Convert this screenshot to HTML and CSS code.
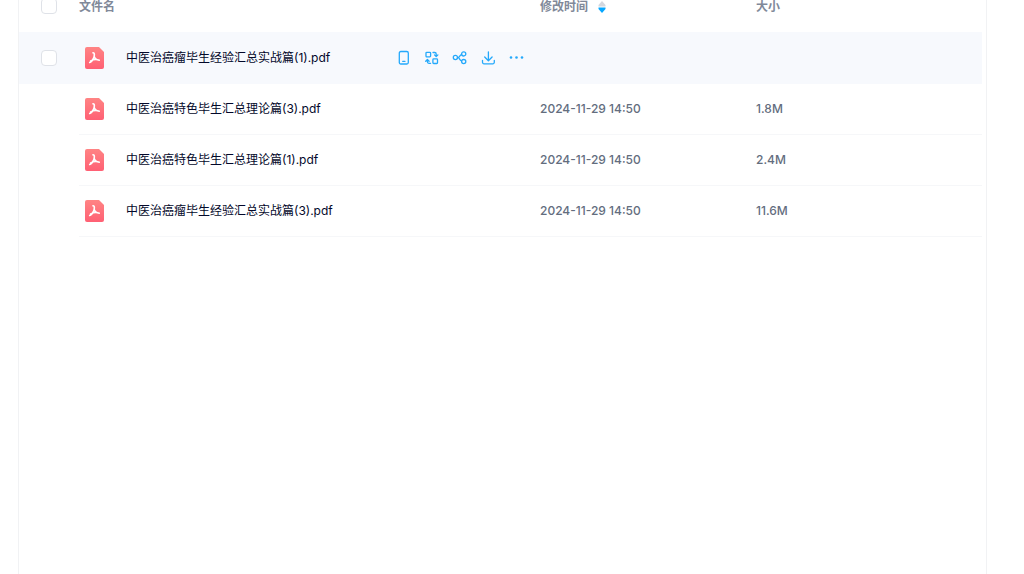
FILE: index.html
```html
<!DOCTYPE html>
<html lang="zh-CN">
<head>
<meta charset="utf-8">
<title>文件列表</title>
<link rel="stylesheet" href="styles.css">
</head>
<body>
<svg class="defs" aria-hidden="true">
  <defs>
    <linearGradient id="pdf-fill" x1="0" y1="0" x2="0" y2="1">
      <stop offset="0" stop-color="#ff8484"/>
      <stop offset="1" stop-color="#ff6074"/>
    </linearGradient>
    <symbol id="pdf" viewBox="0 0 19 22">
      <path d="M2 0H14L19 5V20A2 2 0 0 1 17 22H2A2 2 0 0 1 0 20V2A2 2 0 0 1 2 0Z" fill="url(#pdf-fill)"/>
      <path d="M8 5.800C9.800 5.600 9.600 9 8.600 11.200C7.600 13.400 6.200 15.200 4.700 15.500M9.100 9.200C9.600 11.300 11.600 12.800 14 13M5.600 14C8 12.700 11.300 12 14.200 13.200" fill="none" stroke="#fff" stroke-width="1.600" stroke-linecap="round" stroke-linejoin="round"/>
    </symbol>
  </defs>
</svg>
<main class="panel">
  <table class="files">
    <colgroup><col class="col-check"><col><col class="col-date"><col class="col-size"></colgroup>
    <thead>
      <tr>
        <th class="check-cell"><input class="check" type="checkbox" aria-label="全选"></th>
        <th scope="col">文件名</th>
        <th scope="col">
          <button class="sort" type="button">修改时间
            <svg class="sort-icon" viewBox="0 0 8 12" aria-hidden="true"><path d="M4 0L7.500 4V5.500H.5V4Z" fill="#d4d7de"/><path d="M.5 6.500H7.500V8L4 12L.5 8Z" fill="#06a7ff"/></svg>
          </button>
        </th>
        <th scope="col">大小</th>
      </tr>
    </thead>
    <tbody>
      <tr class="active">
        <td class="check-cell"><input class="check" type="checkbox" aria-label="选择文件"></td>
        <td>
          <div class="file">
            <svg class="file-icon" aria-hidden="true"><use href="#pdf"/></svg>
            <a class="name" href="#">中医治癌瘤毕生经验汇总实战篇(1).pdf</a>
            <div class="actions">
              <button class="action" type="button" aria-label="发送到手机"><svg viewBox="0 0 16 16"><rect x="3.300" y="1.500" width="9" height="12.500" rx="1.500"/><path d="M6.700 11.300H9"/></svg></button>
              <button class="action" type="button" aria-label="格式转换"><svg viewBox="0 0 16 16"><rect x="2" y="2.300" width="4.600" height="4.600" rx=".8"/><rect x="8.900" y="8.900" width="4.600" height="4.600" rx=".8"/><path d="M9 2.500H10.700A1.500 1.500 0 0 1 12.200 4V6M10.500 4.900L12.200 6.600L13.900 4.900M6.600 13.300H4.900A1.500 1.500 0 0 1 3.400 11.800V10M1.700 11.200L3.400 9.500L5.100 11.200"/></svg></button>
              <button class="action" type="button" aria-label="分享"><svg viewBox="0 0 16 16"><circle cx="3.400" cy="7.500" r="2.100"/><circle cx="11.700" cy="3.900" r="2.100"/><circle cx="11.700" cy="11.600" r="2.100"/><path d="M5.500 7.500H6.500M9.600 4.700C8.200 5 7.800 6.200 6.500 7.500C7.800 9 8.200 10.600 9.600 11"/></svg></button>
              <button class="action" type="button" aria-label="下载"><svg viewBox="0 0 16 16"><path d="M8.400 2V10.500M4.700 7L8.400 10.700L12.100 7M2.500 10.300V12.300A1.500 1.500 0 0 0 4 13.800H12.800A1.500 1.500 0 0 0 14.300 12.300V10.300"/></svg></button>
              <button class="action" type="button" aria-label="更多"><svg viewBox="0 0 16 16"><g fill="currentColor" stroke="none"><circle cx="3" cy="7.500" r="1.300"/><circle cx="8.500" cy="7.500" r="1.300"/><circle cx="14" cy="7.500" r="1.300"/></g></svg></button>
            </div>
          </div>
        </td>
        <td></td>
        <td></td>
      </tr>
      <tr>
        <td class="check-cell"></td>
        <td><div class="file"><svg class="file-icon" aria-hidden="true"><use href="#pdf"/></svg><a class="name" href="#">中医治癌特色毕生汇总理论篇(3).pdf</a></div></td>
        <td>2024-11-29 14:50</td>
        <td>1.8M</td>
      </tr>
      <tr>
        <td class="check-cell"></td>
        <td><div class="file"><svg class="file-icon" aria-hidden="true"><use href="#pdf"/></svg><a class="name" href="#">中医治癌特色毕生汇总理论篇(1).pdf</a></div></td>
        <td>2024-11-29 14:50</td>
        <td>2.4M</td>
      </tr>
      <tr>
        <td class="check-cell"></td>
        <td><div class="file"><svg class="file-icon" aria-hidden="true"><use href="#pdf"/></svg><a class="name" href="#">中医治癌瘤毕生经验汇总实战篇(3).pdf</a></div></td>
        <td>2024-11-29 14:50</td>
        <td>11.6M</td>
      </tr>
    </tbody>
  </table>
</main>
</body>
</html>
```
FILE: styles.css
```css
* { box-sizing: border-box; }
body {
  margin: 0;
  background: #fff;
  color: #636d7e;
  font: 500 12px/16px Inter, "Noto Sans CJK SC", sans-serif;
}
.defs { position: absolute; width: 0; height: 0; }
.panel {
  min-height: 100vh;
  margin: 0 37px 0 18px;
  padding-right: 4px;
  border: solid #f1f2f4;
  border-width: 0 1px;
}
.files {
  width: 100%;
  table-layout: fixed;
  border-collapse: separate;
  border-spacing: 0;
}
.col-check { width: 60px; }
.col-date { width: 216px; }
.col-size { width: 226px; }
th, td { padding: 0; text-align: left; }
th {
  height: 32px;
  vertical-align: top;
  line-height: 14px;
  font-weight: 700;
  color: #818999;
}
td {
  height: 51px;
  vertical-align: middle;
  border-bottom: 1px solid #f6f7f9;
}
td.check-cell { border-bottom-color: transparent; }
.check-cell { padding-left: 22px; }
.active td { height: 52px; background: #f7f9fd; border-bottom-color: #f7f9fd; }
.check {
  display: block;
  width: 16px;
  height: 16px;
  margin: 0;
  appearance: none;
  background: #fff;
  border: 1px solid #dfe2e8;
  border-radius: 4px;
}
th .check { margin-top: -2px; }
.sort {
  display: flex;
  align-items: center;
  gap: 10px;
  padding: 0;
  border: 0;
  background: none;
  color: inherit;
  font: inherit;
}
.sort-icon { width: 8px; height: 12px; }
.file {
  display: flex;
  align-items: center;
  padding: 0 16px 0 6px;
}
.file-icon { flex: none; width: 19px; height: 22px; margin-right: 22px; }
.name {
  color: #03082a;
  font-weight: 400;
  text-decoration: none;
  white-space: nowrap;
}
.actions { display: flex; gap: 12px; margin-left: auto; }
.action {
  width: 16px;
  height: 16px;
  padding: 0;
  border: 0;
  background: none;
  color: #25a9fb;
}
.action svg {
  display: block;
  width: 16px;
  height: 16px;
  fill: none;
  stroke: currentColor;
  stroke-width: 1.3;
  stroke-linecap: round;
  stroke-linejoin: round;
}
```
